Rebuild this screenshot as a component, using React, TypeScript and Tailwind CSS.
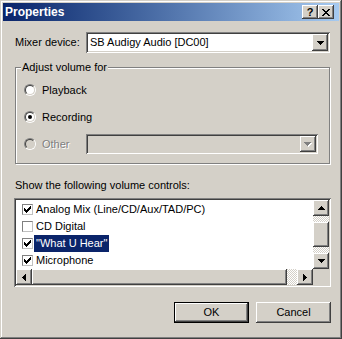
import React from "react";

const raised =
  "bg-[#d4d0c8] shadow-[inset_-1px_-1px_#404040,inset_1px_1px_#fff,inset_-2px_-2px_#808080,inset_2px_2px_#d4d0c8]";
const sunken =
  "shadow-[inset_1px_1px_#808080,inset_-1px_-1px_#fff,inset_2px_2px_#404040,inset_-2px_-2px_#d4d0c8]";
const dither =
  "bg-[repeating-conic-gradient(#fff_0_25%,#d4d0c8_0_50%)] bg-[length:2px_2px]";

type Dir = "up" | "down" | "left" | "right";

function Arrow({ dir, color = "#000" }: { dir: Dir; color?: string }) {
  // classic 7x4 pixel triangles
  const rows = [
    [0, 7],
    [1, 5],
    [2, 3],
    [3, 1],
  ];
  const vertical = dir === "up" || dir === "down";
  return (
    <svg
      width={vertical ? 7 : 4}
      height={vertical ? 4 : 7}
      shapeRendering="crispEdges"
      className="block"
    >
      {rows.map(([o, len], i) => {
        if (dir === "down") return <rect key={i} x={o} y={i} width={len} height={1} fill={color} />;
        if (dir === "up") return <rect key={i} x={o} y={3 - i} width={len} height={1} fill={color} />;
        if (dir === "right") return <rect key={i} x={i} y={o} width={1} height={len} fill={color} />;
        return <rect key={i} x={3 - i} y={o} width={1} height={len} fill={color} />;
      })}
    </svg>
  );
}

function DisabledArrow() {
  return (
    <div className="relative w-[8px] h-[5px]">
      <div className="absolute left-[1px] top-[1px]">
        <Arrow dir="down" color="#fff" />
      </div>
      <div className="absolute left-0 top-0">
        <Arrow dir="down" color="#808080" />
      </div>
    </div>
  );
}

function Check() {
  const rows: [number, number, number][] = [
    [6, 0, 1],
    [5, 1, 2],
    [0, 2, 1],
    [4, 2, 3],
    [0, 3, 2],
    [3, 3, 3],
    [0, 4, 5],
    [1, 5, 3],
    [2, 6, 1],
  ];
  return (
    <svg width={7} height={7} shapeRendering="crispEdges" className="block">
      {rows.map(([x, y, w], i) => (
        <rect key={i} x={x} y={y} width={w} height={1} fill="#000" />
      ))}
    </svg>
  );
}

function CloseGlyph() {
  const rows: [number, number][][] = [
    [[0, 2], [6, 2]],
    [[1, 2], [5, 2]],
    [[2, 4]],
    [[3, 2]],
    [[2, 4]],
    [[1, 2], [5, 2]],
    [[0, 2], [6, 2]],
  ];
  return (
    <svg width={8} height={7} shapeRendering="crispEdges" className="block">
      {rows.flatMap((segs, y) =>
        segs.map(([x, w], i) => <rect key={`${y}-${i}`} x={x} y={y} width={w} height={1} fill="#000" />)
      )}
    </svg>
  );
}

function Radio({ checked, disabled }: { checked?: boolean; disabled?: boolean }) {
  return (
    <div className="w-[12px] h-[12px] shrink-0 rounded-full border border-t-[#808080] border-l-[#808080] border-b-white border-r-white">
      <div
        className={`w-full h-full rounded-full border border-t-[#404040] border-l-[#404040] border-b-[#d4d0c8] border-r-[#d4d0c8] flex items-center justify-center ${
          disabled ? "bg-[#d4d0c8]" : "bg-white"
        }`}
      >
        {checked && <div className="w-[4px] h-[4px] rounded-full bg-black" />}
      </div>
    </div>
  );
}

function ScrollBtn({ dir }: { dir: Dir }) {
  return (
    <div className={`w-[16px] h-[16px] shrink-0 ${raised} flex items-center justify-center`}>
      <Arrow dir={dir} />
    </div>
  );
}

const controls = [
  { label: "Analog Mix (Line/CD/Aux/TAD/PC)", on: true },
  { label: "CD Digital", on: false },
  { label: "\"What U Hear\"", on: true, selected: true },
  { label: "Microphone", on: true },
];

export default function App() {
  return (
    <div
      className="w-[342px] h-[339px] bg-[#d4d0c8] p-[3px] flex flex-col text-[11px] leading-[13px] text-black font-['Liberation_Sans',Arial,sans-serif] shadow-[inset_-1px_-1px_#404040,inset_1px_1px_#d4d0c8,inset_-2px_-2px_#808080,inset_2px_2px_#fff]"
    >
      {/* title bar */}
      <div className="h-[18px] flex items-center bg-gradient-to-r from-[#0a246a] to-[#a6caf0] pl-[2px] pr-[5px]">
        <span className="flex-1 font-bold text-white text-[12px]">Properties</span>
        <div className={`w-[16px] h-[14px] ${raised} flex items-center justify-center font-bold text-[11px] leading-none`}>
          ?
        </div>
        <div className={`w-[16px] h-[14px] ${raised} flex items-center justify-center`}>
          <CloseGlyph />
        </div>
      </div>

      {/* mixer device */}
      <div className="mt-[11px] h-[21px] flex items-center">
        <span className="ml-[12px] w-[71px]">Mixer device:</span>
        <div className={`w-[244px] h-[21px] bg-white ${sunken} p-[2px] flex`}>
          <div className="flex-1 flex items-center pl-[2px]">SB Audigy Audio [DC00]</div>
          <div className={`w-[16px] h-[17px] ${raised} flex items-center justify-center`}>
            <Arrow dir="down" />
          </div>
        </div>
      </div>

      {/* adjust volume group */}
      <fieldset className="mt-[8px] ml-[12px] w-[315px] border border-[#808080] shadow-[1px_1px_0_#fff,inset_1px_1px_0_#fff]">
        <legend className="ml-[5px] px-[1px] bg-[#d4d0c8] leading-[13px]">Adjust volume for</legend>
        <div className="pt-[6px] pb-[9px] pl-[8px] flex flex-col gap-[7px]">
          <div className="h-[20px] flex items-center gap-[6px]">
            <Radio />
            <span>Playback</span>
          </div>
          <div className="h-[20px] flex items-center gap-[6px]">
            <Radio checked />
            <span>Recording</span>
          </div>
          <div className="h-[20px] flex items-center">
            <Radio disabled />
            <span className="ml-[6px] w-[44px] text-[#808080] [text-shadow:1px_1px_0_#fff]">Other</span>
            <div className={`w-[232px] h-[20px] bg-[#d4d0c8] ${sunken} p-[2px] flex justify-end`}>
              <div className={`w-[16px] h-[16px] ${raised} flex items-center justify-center`}>
                <DisabledArrow />
              </div>
            </div>
          </div>
        </div>
      </fieldset>

      <div className="mt-[15px] ml-[12px]">Show the following volume controls:</div>

      {/* list of controls */}
      <div className={`mt-[6px] ml-[11px] w-[317px] h-[89px] bg-white ${sunken} p-[2px] flex flex-col`}>
        <div className="flex flex-1 min-h-0">
          <div className="flex-1 pt-[1px] flex flex-col">
            {controls.map((c) => (
              <div key={c.label} className="h-[17px] flex items-center">
                <div className="ml-[6px] w-[11px] h-[11px] border border-[#808080] border-b-[#c0c0c0] border-r-[#c0c0c0] bg-white flex items-center justify-center">
                  {c.on && <Check />}
                </div>
                <span
                  className={`ml-[1px] px-[2px] h-full flex items-center whitespace-nowrap ${
                    c.selected ? "bg-[#0a246a] text-white" : ""
                  }`}
                >
                  {c.label}
                </span>
              </div>
            ))}
          </div>
          <div className="w-[16px] flex flex-col">
            <ScrollBtn dir="up" />
            <div className={`h-[6px] ${dither}`} />
            <div className={`h-[25px] ${raised}`} />
            <div className={`flex-1 ${dither}`} />
            <ScrollBtn dir="down" />
          </div>
        </div>
        <div className="h-[16px] flex">
          <ScrollBtn dir="left" />
          <div className={`w-[255px] ${raised}`} />
          <div className={`flex-1 ${dither}`} />
          <ScrollBtn dir="right" />
          <div className="w-[16px] bg-[#d4d0c8]" />
        </div>
      </div>

      {/* buttons */}
      <div className="mt-[15px] pr-[8px] flex justify-end gap-[7px]">
        <div className="w-[75px] h-[21px] border border-black">
          <div className={`w-full h-full ${raised} flex items-center justify-center`}>OK</div>
        </div>
        <div className={`w-[75px] h-[21px] ${raised} flex items-center justify-center`}>Cancel</div>
      </div>
    </div>
  );
}
